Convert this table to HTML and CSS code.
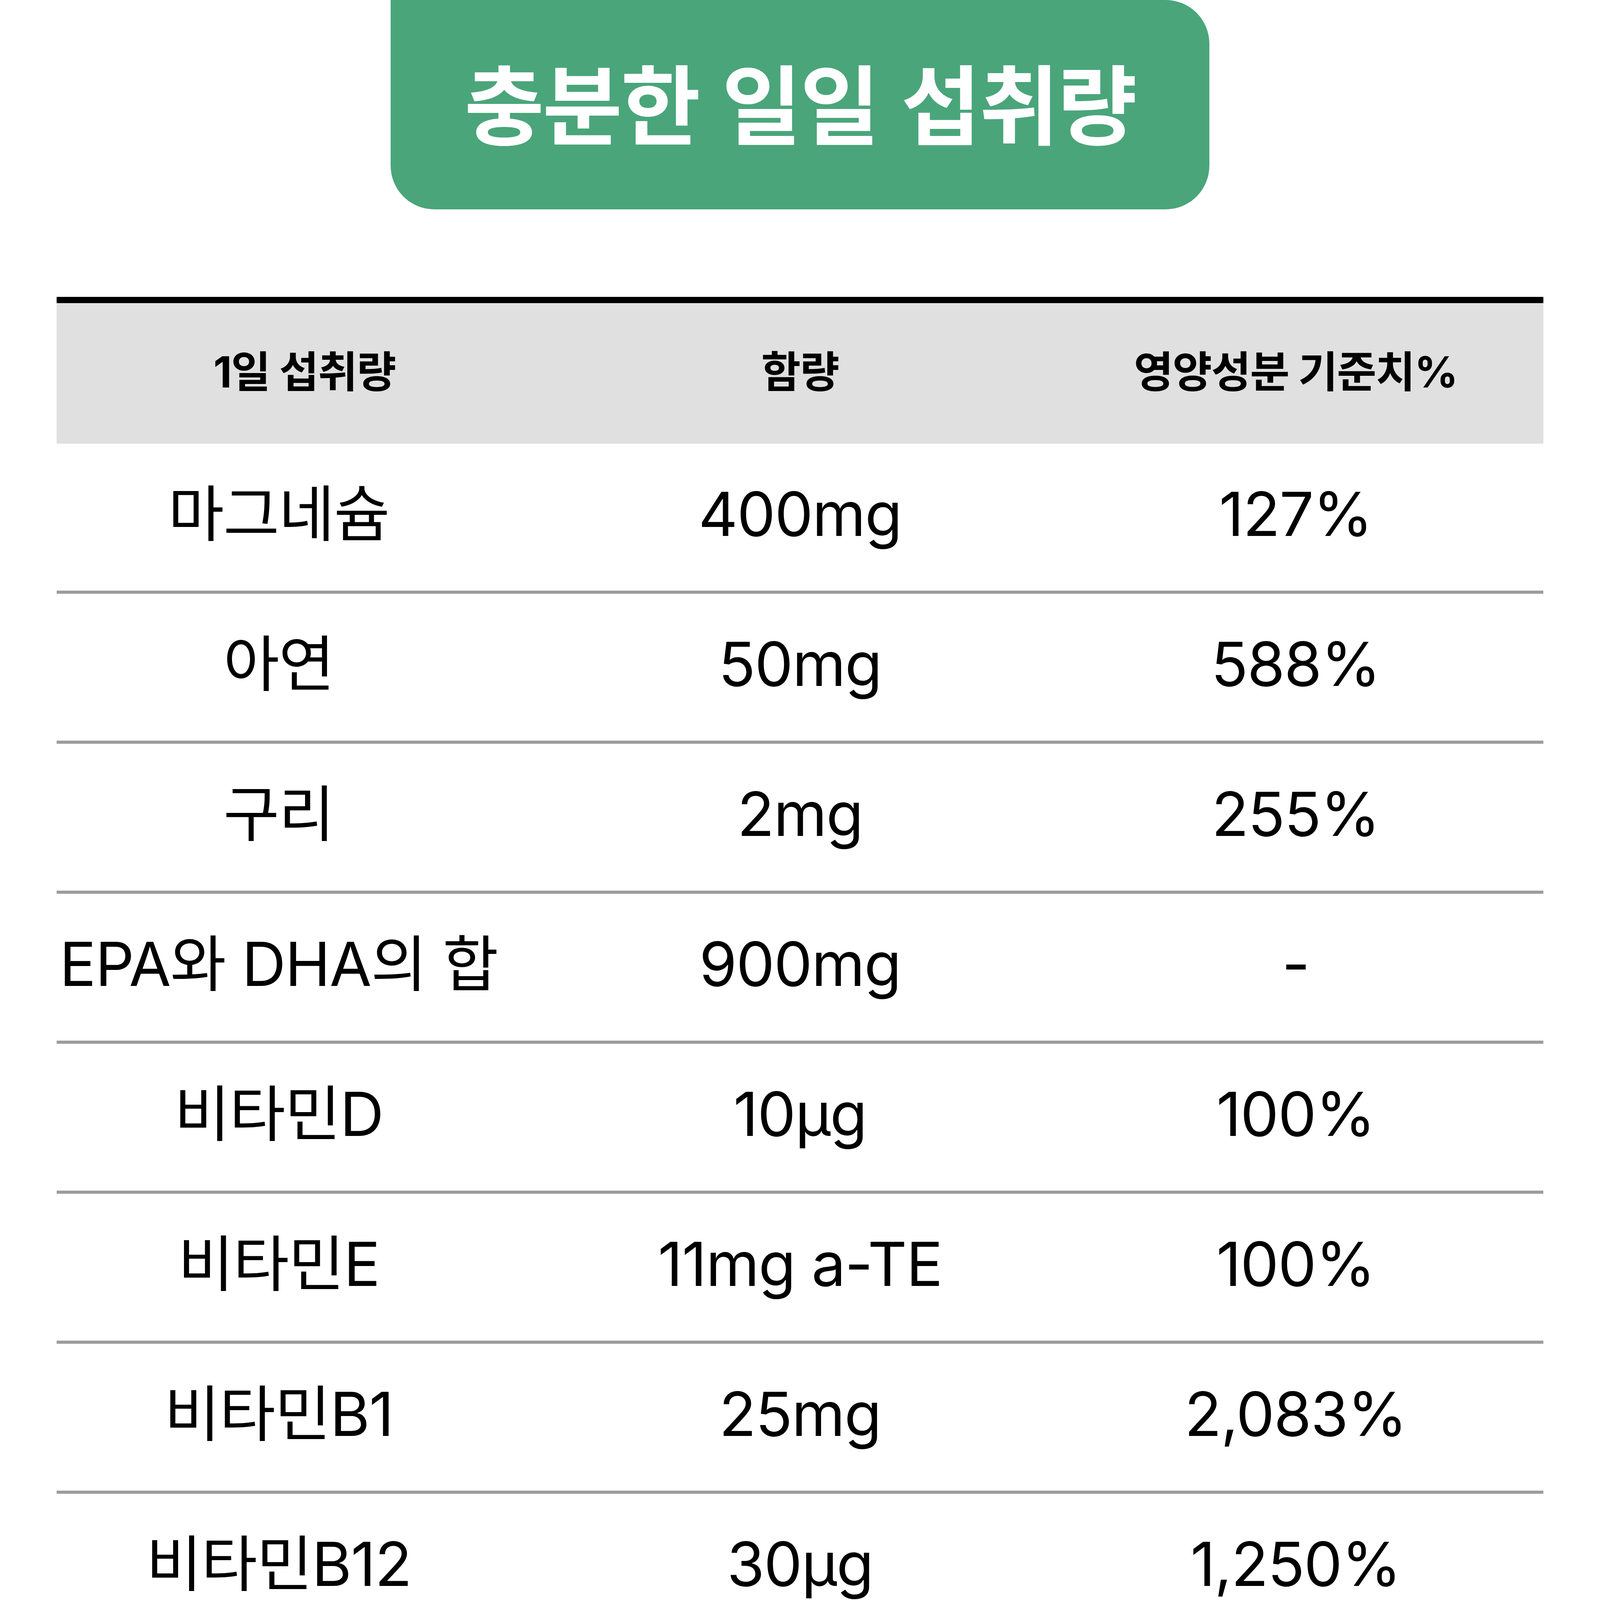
FILE: index.html
```html
<!DOCTYPE html>
<html lang="ko">
<head>
<meta charset="utf-8">
<title>충분한 일일 섭취량</title>
<link rel="stylesheet" href="styles.css">
</head>
<body>
<div class="page">
  <div class="badge"><h1 class="badge-title">충분한 일일 섭취량</h1></div>
  <div class="table">
    <div class="row head">
      <div class="cell">1일 섭취량</div>
      <div class="cell">함량</div>
      <div class="cell">영양성분 기준치%</div>
    </div>
    <div class="row"><div class="cell name">마그네슘</div><div class="cell">400mg</div><div class="cell">127%</div></div>
    <div class="row"><div class="cell name">아연</div><div class="cell">50mg</div><div class="cell">588%</div></div>
    <div class="row"><div class="cell name">구리</div><div class="cell">2mg</div><div class="cell">255%</div></div>
    <div class="row"><div class="cell name">EPA와 DHA의 합</div><div class="cell">900mg</div><div class="cell">-</div></div>
    <div class="row"><div class="cell name">비타민D</div><div class="cell">10μg</div><div class="cell">100%</div></div>
    <div class="row"><div class="cell name">비타민E</div><div class="cell">11mg a-TE</div><div class="cell">100%</div></div>
    <div class="row"><div class="cell name">비타민B1</div><div class="cell">25mg</div><div class="cell">2,083%</div></div>
    <div class="row"><div class="cell name">비타민B12</div><div class="cell">30μg</div><div class="cell">1,250%</div></div>
    <div class="row"><div class="cell name">비타민B6</div><div class="cell">20mg</div><div class="cell">1,333%</div></div>
    <div class="row"><div class="cell name">비타민B2</div><div class="cell">24mg</div><div class="cell">1,714%</div></div>
    <div class="row"><div class="cell name">비타민B5</div><div class="cell">20mg</div><div class="cell">400%</div></div>
    <div class="row"><div class="cell name">비타민B3</div><div class="cell">20mgNE</div><div class="cell">133%</div></div>
    <div class="row"><div class="cell name">비오틴</div><div class="cell">60μg</div><div class="cell">200%</div></div>
    <div class="row"><div class="cell name">엽산</div><div class="cell">680μg DFE</div><div class="cell">170%</div></div>
  </div>
</div>
</body>
</html>
```
FILE: styles.css
```css
html, body {
  margin: 0;
  padding: 0;
  background: #ffffff;
}

.page {
  width: 100%;
  font-family: "Inter", "Noto Sans CJK KR", sans-serif;
  color: #000000;
}

.badge {
  width: 2096px;
  height: 536px;
  margin: 0 auto;
  background: #4aa57b;
  border-radius: 0 112px 112px 112px;
  display: flex;
  align-items: center;
  justify-content: center;
}

.badge-title {
  margin: 0;
  padding-bottom: 24px;
  font-family: "Noto Sans CJK KR", sans-serif;
  font-weight: 700;
  font-size: 222px;
  letter-spacing: -4px;
  line-height: 1;
  color: #ffffff;
}

.table {
  width: 3806px;
  margin: 224px auto 0;
  border-top: 16px solid #000000;
}

.row {
  display: grid;
  grid-template-columns: repeat(3, 1fr);
  align-items: center;
  height: 384px;
  box-sizing: border-box;
  border-bottom: 8px solid #9c9c9c;
  font-size: 156px;
  font-weight: 400;
  letter-spacing: -2px;
  line-height: 1.2;
}

.row.head {
  height: 360px;
  border-bottom: none;
  background: #e0e0e0;
  font-size: 110px;
  font-weight: 700;
  letter-spacing: -2px;
}

.cell {
  text-align: center;
  white-space: nowrap;
  padding-bottom: 16px;
}

.row.head .cell {
  padding-bottom: 8px;
}

.cell.name {
  padding-right: 132px;
}
```
